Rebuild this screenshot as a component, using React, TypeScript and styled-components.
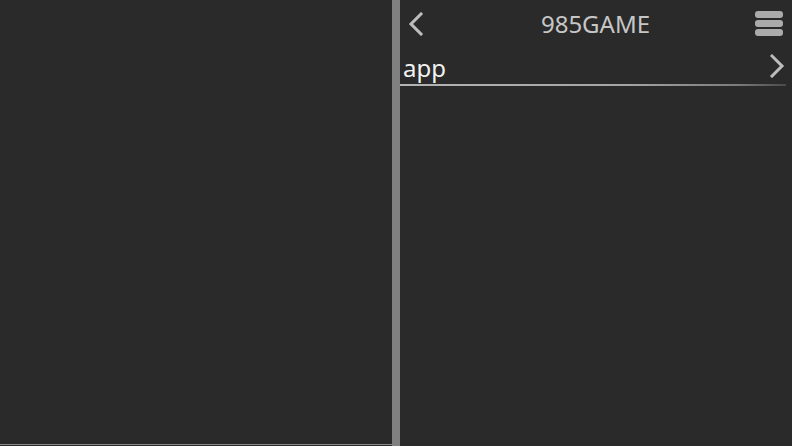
import React from 'react'
import styled, { createGlobalStyle } from 'styled-components'

const GlobalStyle = createGlobalStyle`
  html, body {
    margin: 0;
    padding: 0;
    background: #2a2a2a;
  }

  #root {
    width: 792px;
    height: 446px;
  }
`

const Screen = styled.div`
  display: flex;
  width: 100%;
  height: 100%;
  background: #2a2a2a;
  font-family: 'Noto Sans', 'Open Sans', sans-serif;
  overflow: hidden;
`

const LeftPane = styled.div`
  display: flex;
  flex-direction: column;
  width: 392px;
  flex-shrink: 0;
`

const Filler = styled.div`
  flex: 1;
`

const BottomRule = styled.div`
  height: 1px;
  margin-bottom: 1px;
  background: #8a8a8a;
`

const Divider = styled.div`
  width: 8px;
  flex-shrink: 0;
  background: #808080;
`

const RightPane = styled.div`
  display: flex;
  flex-direction: column;
  flex: 1;
`

const Header = styled.header`
  display: grid;
  grid-template-columns: 40px 1fr 40px;
  align-items: center;
  height: 47px;
  padding: 0 9px 0 8px;
`

const Title = styled.h1`
  margin: 0;
  text-align: center;
  font-size: 24px;
  font-weight: 400;
  color: #c6c6c6;
  line-height: 1;
`

const IconButton = styled.button<{ $align?: 'start' | 'end' }>`
  display: flex;
  justify-content: ${({ $align }) => ($align === 'end' ? 'flex-end' : 'flex-start')};
  align-items: center;
  padding: 0;
  border: 0;
  background: none;
  cursor: pointer;
`

const MenuBars = styled.div`
  display: flex;
  flex-direction: column;
  gap: 2px;
`

const MenuBar = styled.span`
  display: block;
  width: 28px;
  height: 7px;
  border-radius: 3px;
  background: #ababab;
`

const ListRow = styled.div`
  display: flex;
  align-items: center;
  justify-content: space-between;
  height: 37px;
  padding: 0 6px 0 3px;
`

const RowLabel = styled.span`
  font-size: 24px;
  color: #f2f2f2;
  line-height: 1;
  margin-top: 4px;
`

const RowRule = styled.div`
  height: 2px;
  margin-right: 6px;
  background: linear-gradient(to right, #b4b4b4 0%, #a4a4a4 60%, #7a7a7a 88%, #4a4a4a 100%);
`

function Chevron({ dir }: { dir: 'left' | 'right' }) {
  const points = dir === 'left' ? '13,2 3,12 13,22' : '2,2 12,12 2,22'
  return (
    <svg width="16" height="24" viewBox="0 0 16 24">
      <polyline points={points} fill="none" stroke="#bdbdbd" strokeWidth="3" strokeLinecap="square" />
    </svg>
  )
}

export default function App() {
  return (
    <>
      <GlobalStyle />
      <Screen>
        <LeftPane>
          <Filler />
          <BottomRule />
        </LeftPane>

        <Divider />

        <RightPane>
          <Header>
            <IconButton>
              <Chevron dir="left" />
            </IconButton>
            <Title>985GAME</Title>
            <IconButton $align="end">
              <MenuBars>
                <MenuBar />
                <MenuBar />
                <MenuBar />
              </MenuBars>
            </IconButton>
          </Header>

          <ListRow>
            <RowLabel>app</RowLabel>
            <Chevron dir="right" />
          </ListRow>
          <RowRule />
        </RightPane>
      </Screen>
    </>
  )
}
